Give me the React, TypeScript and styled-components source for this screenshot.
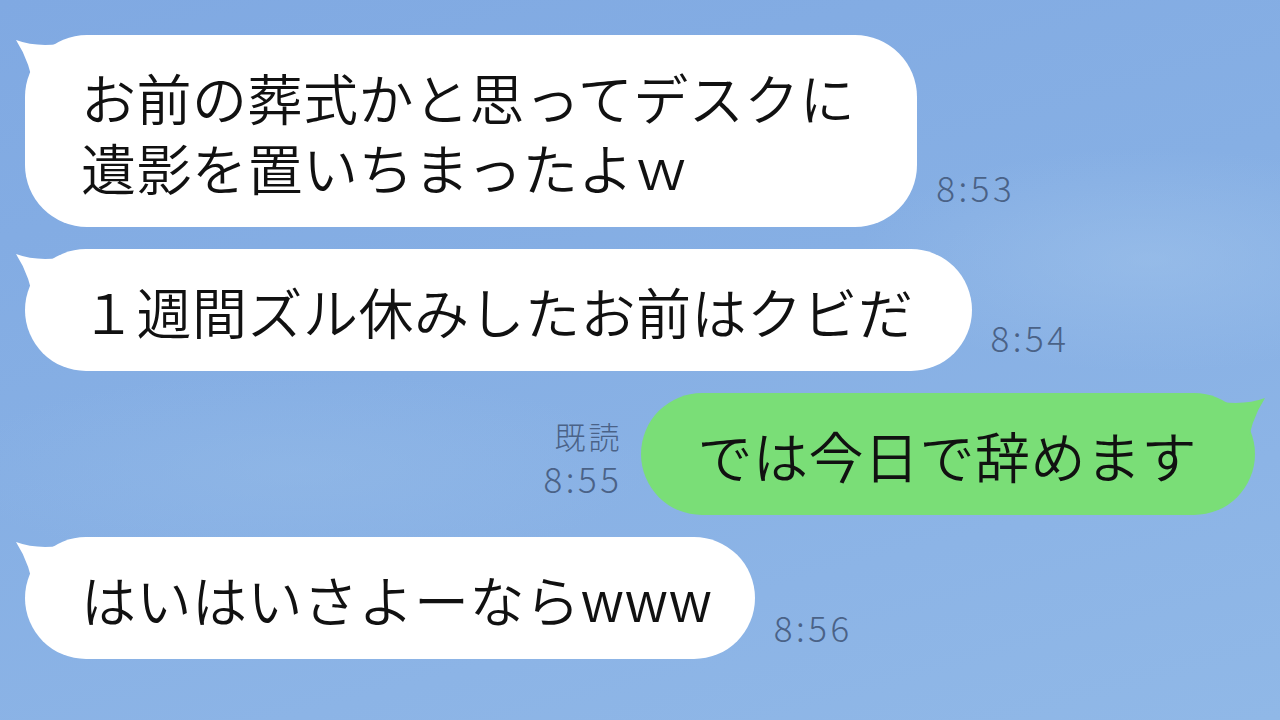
import React from "react";
import styled, { createGlobalStyle } from "styled-components";

const Global = createGlobalStyle`
  html, body { margin: 0; padding: 0; }
  body { width: 1280px; height: 720px; overflow: hidden; }
`;

const Screen = styled.div`
  width: 1280px;
  height: 720px;
  box-sizing: border-box;
  padding: 35px 25px 0 25px;
  display: flex;
  flex-direction: column;
  gap: 22px;
  background:
    radial-gradient(ellipse 420px 160px at 1150px 260px, rgba(160, 195, 235, 0.55), transparent 70%),
    radial-gradient(ellipse 500px 140px at 300px 470px, rgba(150, 188, 232, 0.45), transparent 70%),
    linear-gradient(165deg, #80a9e2 0%, #86afe4 45%, #8cb4e6 75%, #90b8e7 100%);
  font-family: "Noto Sans CJK JP", "Noto Sans", sans-serif;
`;

const Row = styled.div<{ $mine?: boolean }>`
  display: flex;
  align-items: flex-end;
  justify-content: ${(p) => (p.$mine ? "flex-end" : "flex-start")};
  gap: 19px;
`;

const Bubble = styled.div<{ $mine?: boolean; $padRight: number }>`
  position: relative;
  background: ${(p) => (p.$mine ? "#7ade77" : "#ffffff")};
  color: #111;
  font-size: 55px;
  font-weight: 350;
  letter-spacing: 0.5px;
  line-height: 70px;
  padding: 26px ${(p) => p.$padRight}px 26px 56px;
  border-radius: 62px;
  white-space: nowrap;
`;

const Tail = styled.svg<{ $mine?: boolean }>`
  position: absolute;
  top: 0;
  width: 52px;
  height: 64px;
  ${(p) => (p.$mine ? "right: -11px; transform: scaleX(-1);" : "left: -10px;")}
`;

const Meta = styled.div<{ $mine?: boolean; $lift: number }>`
  display: flex;
  flex-direction: column;
  align-items: ${(p) => (p.$mine ? "flex-end" : "flex-start")};
  padding-bottom: ${(p) => p.$lift}px;
  color: #4a6287;
  font-family: "Noto Sans CJK JP", "Noto Sans", sans-serif;
  font-weight: 300;
  font-size: 35px;
  line-height: 44px;
  letter-spacing: 3.5px;
`;

const Read = styled.span`
  font-size: 31px;
  line-height: 40px;
  letter-spacing: 3px;
`;

const TailShape: React.FC<{ mine?: boolean; color: string }> = ({ mine, color }) => (
  <Tail $mine={mine} viewBox="0 0 52 64">
    <path d="M1 5 Q 20 12 44 9 L 44 60 L 20 60 Q 16 28 1 5 Z" fill={color} />
  </Tail>
);

type Msg = {
  mine?: boolean;
  lines: string[];
  time: string;
  read?: boolean;
  padRight: number;
  lift: number;
};

const messages: Msg[] = [
  { lines: ["お前の葬式かと思ってデスクに", "遺影を置いちまったよｗ"], time: "8:53", padRight: 62, lift: 18 },
  { lines: ["１週間ズル休みしたお前はクビだ"], time: "8:54", padRight: 58, lift: 12 },
  { mine: true, lines: ["では今日で辞めます"], time: "8:55", read: true, padRight: 58, lift: 15 },
  { lines: ["はいはいさよーならwww"], time: "8:56", padRight: 42, lift: 10 },
];

export default function App() {
  return (
    <>
      <Global />
      <Screen>
        {messages.map((m, i) => {
          const bubble = (
            <Bubble $mine={m.mine} $padRight={m.padRight}>
              <TailShape mine={m.mine} color={m.mine ? "#7ade77" : "#ffffff"} />
              {m.lines.map((l, j) => (
                <React.Fragment key={j}>
                  {j > 0 && <br />}
                  {l}
                </React.Fragment>
              ))}
            </Bubble>
          );
          const meta = (
            <Meta $mine={m.mine} $lift={m.lift}>
              {m.read && <Read>既読</Read>}
              <span>{m.time}</span>
            </Meta>
          );
          return (
            <Row key={i} $mine={m.mine}>
              {m.mine ? (
                <>
                  {meta}
                  {bubble}
                </>
              ) : (
                <>
                  {bubble}
                  {meta}
                </>
              )}
            </Row>
          );
        })}
      </Screen>
    </>
  );
}
